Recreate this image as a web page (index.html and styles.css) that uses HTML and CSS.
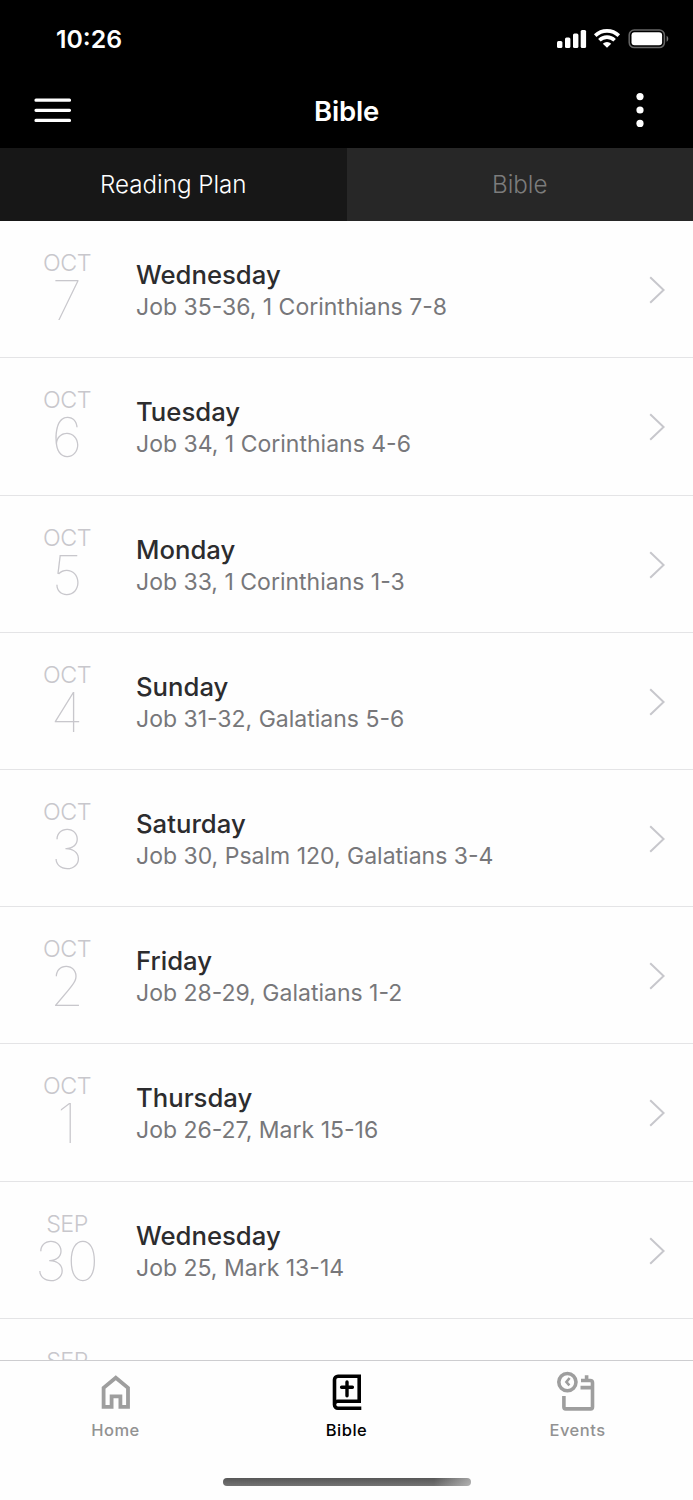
FILE: index.html
```html
<!DOCTYPE html>
<html lang="en">
<head>
    <meta charset="UTF-8">
    <meta name="viewport" content="width=device-width, initial-scale=1.0">
    <title>Bible</title>
    <link rel="stylesheet" href="styles.css">
</head>
<body>
    <header class="header">
        <div class="status-bar">
            <span class="time">10:26</span>
            <svg class="status-icons" width="112" height="20" viewBox="0 0 112 20">
                <g fill="#fff">
                    <rect x="0" y="12" width="5.4" height="7" rx="1.5"/>
                    <rect x="8" y="8.5" width="5.4" height="10.5" rx="1.5"/>
                    <rect x="16" y="4.5" width="5.4" height="14.5" rx="1.5"/>
                    <rect x="23.7" y="1" width="5.4" height="18" rx="1.5"/>
                    <path d="M50 18.8l-4.2-4.1a6 6 0 0 1 8.4 0z"/>
                </g>
                <g fill="none" stroke="#fff" stroke-width="3.6">
                    <path d="M38.2 6.6a17 17 0 0 1 23.6 0"/>
                    <path d="M42.4 11.3a10.8 10.8 0 0 1 15.2 0"/>
                </g>
                <rect x="72.2" y="1" width="35.2" height="17.6" rx="5" fill="none" stroke="#666" stroke-width="1.5"/>
                <rect x="74.5" y="3.3" width="30.6" height="13" rx="3" fill="#fff"/>
                <path d="M109.6 6.8c2.2 1 2.2 5 0 6z" fill="#777"/>
            </svg>
        </div>
        <div class="nav-bar">
            <svg class="menu-icon" width="38" height="26" viewBox="0 0 38 26">
                <path d="M2 3.2h33.5M2 13.3h33.5M2 23.4h33.5" stroke="#fff" stroke-width="3.2" stroke-linecap="round"/>
            </svg>
            <h1>Bible</h1>
            <svg class="more-icon" width="8" height="36" viewBox="0 0 8 36" fill="#fff">
                <circle cx="4" cy="4.6" r="3.6"/>
                <circle cx="4" cy="18" r="3.6"/>
                <circle cx="4" cy="31.4" r="3.6"/>
            </svg>
        </div>
        <nav class="tabs">
            <a class="tab active">Reading Plan</a>
            <a class="tab tab-bible">Bible</a>
        </nav>
    </header>

    <main class="plan-list">
        <div class="plan">
            <div class="date"><span class="month">OCT</span><span class="day">7</span></div>
            <div class="info"><h2>Wednesday</h2><p>Job 35-36, 1 Corinthians 7-8</p></div>
            <svg class="chevron" viewBox="0 0 16 28"><path d="M1.2 1.2L14.6 14 1.2 26.8"/></svg>
        </div>
        <div class="plan">
            <div class="date"><span class="month">OCT</span><span class="day">6</span></div>
            <div class="info"><h2>Tuesday</h2><p>Job 34, 1 Corinthians 4-6</p></div>
            <svg class="chevron" viewBox="0 0 16 28"><path d="M1.2 1.2L14.6 14 1.2 26.8"/></svg>
        </div>
        <div class="plan">
            <div class="date"><span class="month">OCT</span><span class="day">5</span></div>
            <div class="info"><h2>Monday</h2><p>Job 33, 1 Corinthians 1-3</p></div>
            <svg class="chevron" viewBox="0 0 16 28"><path d="M1.2 1.2L14.6 14 1.2 26.8"/></svg>
        </div>
        <div class="plan">
            <div class="date"><span class="month">OCT</span><span class="day">4</span></div>
            <div class="info"><h2>Sunday</h2><p>Job 31-32, Galatians 5-6</p></div>
            <svg class="chevron" viewBox="0 0 16 28"><path d="M1.2 1.2L14.6 14 1.2 26.8"/></svg>
        </div>
        <div class="plan">
            <div class="date"><span class="month">OCT</span><span class="day">3</span></div>
            <div class="info"><h2>Saturday</h2><p>Job 30, Psalm 120, Galatians 3-4</p></div>
            <svg class="chevron" viewBox="0 0 16 28"><path d="M1.2 1.2L14.6 14 1.2 26.8"/></svg>
        </div>
        <div class="plan">
            <div class="date"><span class="month">OCT</span><span class="day">2</span></div>
            <div class="info"><h2>Friday</h2><p>Job 28-29, Galatians 1-2</p></div>
            <svg class="chevron" viewBox="0 0 16 28"><path d="M1.2 1.2L14.6 14 1.2 26.8"/></svg>
        </div>
        <div class="plan">
            <div class="date"><span class="month">OCT</span><span class="day">1</span></div>
            <div class="info"><h2>Thursday</h2><p>Job 26-27, Mark 15-16</p></div>
            <svg class="chevron" viewBox="0 0 16 28"><path d="M1.2 1.2L14.6 14 1.2 26.8"/></svg>
        </div>
        <div class="plan">
            <div class="date"><span class="month">SEP</span><span class="day">30</span></div>
            <div class="info"><h2>Wednesday</h2><p>Job 25, Mark 13-14</p></div>
            <svg class="chevron" viewBox="0 0 16 28"><path d="M1.2 1.2L14.6 14 1.2 26.8"/></svg>
        </div>
        <div class="plan">
            <div class="date"><span class="month">SEP</span></div>
        </div>
    </main>

    <footer class="bottom-bar">
        <nav class="bottom-nav">
            <a class="nav-item">
                <svg width="42" height="42" viewBox="0 0 42 42" fill="none" stroke="#9e9e9e" stroke-width="3.8">
                    <path d="M8.6 35.8V16.9L20.8 6.8 33 16.9v18.9h-7.6V25.4h-8.8v10.4z"/>
                </svg>
                <span>Home</span>
            </a>
            <a class="nav-item active">
                <svg width="42" height="42" viewBox="0 0 42 42" fill="none" stroke="#000" stroke-width="3.6">
                    <path d="M35.3 37.2H11.9a3.4 3.4 0 0 1-3.4-3.4V8.8A3.5 3.5 0 0 1 12 5.3h21.2v25H12a3.5 3.5 0 0 0-3.4 2.2"/>
                    <path d="M21 11v13.8M15.6 16.2h10.8" stroke-width="3.4" stroke-linecap="round"/>
                </svg>
                <span>Bible</span>
            </a>
            <a class="nav-item">
                <svg width="42" height="42" viewBox="0 0 42 42" fill="none" stroke="#9e9e9e" stroke-width="3.6">
                    <circle cx="10.4" cy="11.1" r="8.6"/>
                    <path d="M12.6 7L9.4 11l3 3.4" stroke-width="2.6"/>
                    <path d="M6.9 25v11.1a1.8 1.8 0 0 0 1.8 1.8h25a1.8 1.8 0 0 0 1.8-1.8V11.8A2.3 2.3 0 0 0 33.2 9.5H24M23.5 16.6h12M29.6 4.2v5.5"/>
                </svg>
                <span>Events</span>
            </a>
        </nav>
        <div class="home-indicator"></div>
    </footer>
</body>
</html>
```
FILE: styles.css
```css
* {
    margin: 0;
    padding: 0;
    box-sizing: border-box;
}

body {
    display: flex;
    flex-direction: column;
    height: 1500px;
    overflow: hidden;
    background: #fefefe;
    font-family: Inter, 'Liberation Sans', sans-serif;
}

.header {
    flex: none;
    height: 221px;
    background: #000;
    color: #fff;
}

.status-bar {
    display: flex;
    justify-content: space-between;
    align-items: center;
    height: 77px;
    padding: 0 24px 0 56px;
}

.time {
    font-size: 24.8px;
    font-weight: 600;
}

.nav-bar {
    display: grid;
    grid-template-columns: 1fr auto 1fr;
    align-items: center;
    height: 70.5px;
    padding-bottom: 4px;
}

.menu-icon {
    margin-left: 34px;
}

.more-icon {
    justify-self: end;
    margin-right: 49px;
}

.nav-bar h1 {
    padding-top: 1px;
    font-size: 27.5px;
    font-weight: 600;
    line-height: 36px;
    letter-spacing: -0.2px;
}

.tabs {
    display: flex;
    height: 73.5px;
}

.tab {
    flex: 1;
    background: #171717;
    font-size: 24.2px;
    font-weight: 300;
    line-height: 73px;
    text-align: center;
}

.tab-bible {
    background: #272727;
    color: #7c7c7c;
}

.plan-list {
    flex: 1;
    min-height: 0;
    padding-top: 0.2px;
    overflow: hidden;
}

.plan {
    display: flex;
    height: 137.2px;
    padding-right: 28px;
    border-bottom: 1px solid #e4e4e6;
}

.date {
    display: flex;
    flex-direction: column;
    align-items: center;
    flex: none;
    width: 134px;
    padding-top: 26px;
    color: #c8c7cc;
}

.month {
    font-size: 23.3px;
    font-weight: 300;
    line-height: 32px;
    letter-spacing: -0.5px;
}

.day {
    font-size: 54.5px;
    font-weight: 130;
    line-height: 43px;
}

.info {
    flex: 1;
    padding: 38px 0 0 2px;
}

.info h2 {
    color: #2c2c2e;
    font-size: 25.7px;
    font-weight: 500;
    line-height: 32px;
}

.info p {
    color: #77777a;
    font-size: 23px;
    line-height: 32px;
}

.chevron {
    align-self: center;
    width: 16px;
    height: 28px;
    margin-top: 2px;
    fill: none;
    stroke: #c7c7cc;
    stroke-width: 2;
}

.bottom-bar {
    flex: none;
    height: 140px;
    border-top: 1px solid #cdcdd0;
}

.bottom-nav {
    display: flex;
    height: 117px;
    padding-top: 10px;
}

.nav-item {
    display: flex;
    flex: 1;
    flex-direction: column;
    align-items: center;
    color: #929292;
    font-size: 16.5px;
    font-weight: 500;
    line-height: 34px;
    letter-spacing: 0.5px;
}

.nav-item.active {
    color: #000;
}

.home-indicator {
    width: 248px;
    height: 8px;
    margin: 0 auto;
    border-radius: 4px;
    background: linear-gradient(to right, transparent 85%, rgba(255, 255, 255, 0.45)), linear-gradient(#575757, #737373);
}
```
